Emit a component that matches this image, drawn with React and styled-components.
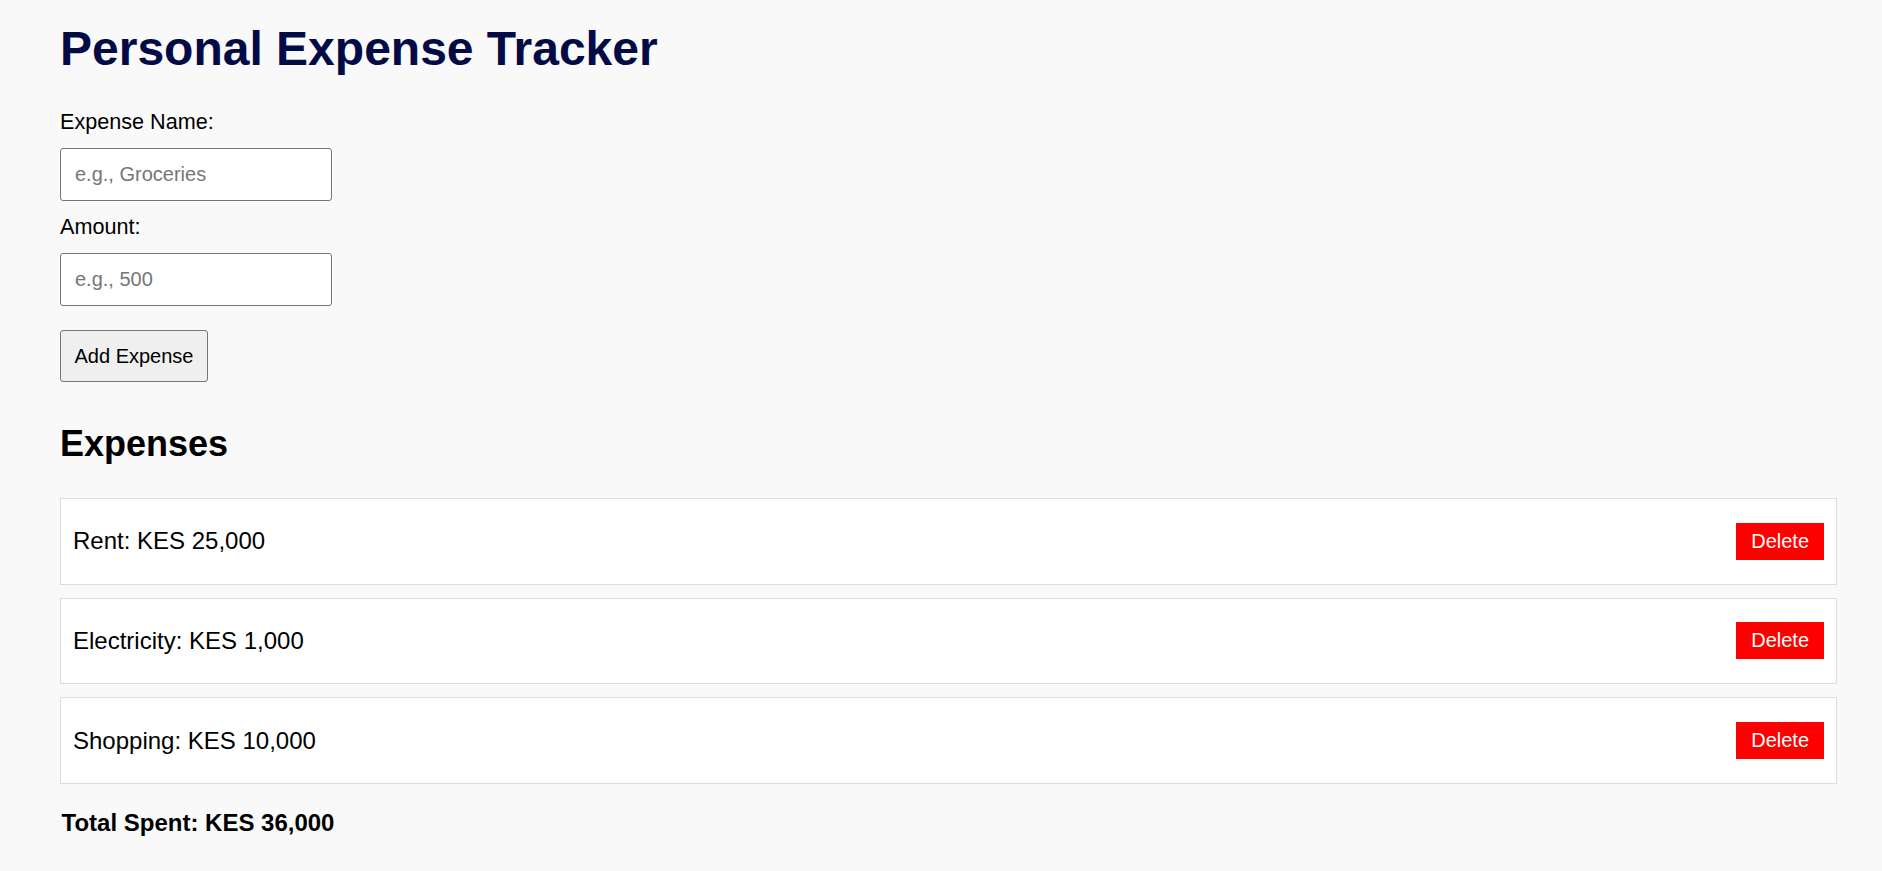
import { useState } from "react";
import styled, { createGlobalStyle } from "styled-components";

const GlobalStyle = createGlobalStyle`
    html, body {
        margin: 0;
        padding: 0;
        background-color: #f9f9f9;
        font-family: "Liberation Sans", Arial, sans-serif;
        color: #000;
    }
    * {
        box-sizing: border-box;
    }
`;

const Page = styled.main`
    padding: 21.6px 45px 40px 60px;
`;

const Title = styled.h1`
    margin: 0 0 34.6px;
    font-size: 48px;
    line-height: 54px;
    font-weight: bold;
    color: #020b45;
`;

const Form = styled.form`
    display: flex;
    flex-direction: column;
    align-items: flex-start;
`;

const Label = styled.label`
    display: block;
    font-size: 21.6px;
    line-height: 24px;
    margin-bottom: 14.3px;
`;

const Input = styled.input`
    width: 272px;
    height: 52.4px;
    padding: 0 14px;
    margin-bottom: ${(props) => props.$gap || "14px"};
    font-family: inherit;
    font-size: 20px;
    border: 1px solid #767676;
    border-radius: 3px;
    background: #fff;

    &::placeholder {
        color: #767676;
    }
`;

const AddButton = styled.button`
    height: 52px;
    width: 148px;
    padding: 0;
    font-family: inherit;
    font-size: 20px;
    color: #000;
    background-color: #efefef;
    border: 1px solid #767676;
    border-radius: 3px;
    cursor: pointer;
`;

const SubTitle = styled.h2`
    margin: 43px 0 35px;
    font-size: 36px;
    line-height: 38px;
    font-weight: bold;
`;

const List = styled.ul`
    list-style: none;
    margin: 0;
    padding: 0;
`;

const Row = styled.li`
    display: flex;
    align-items: center;
    justify-content: space-between;
    height: 86.4px;
    padding: 0 12px;
    margin-bottom: 13.2px;
    background-color: #fff;
    border: 1px solid #dcdcdc;
    font-size: 24px;

    &:last-child {
        margin-bottom: 0;
    }
`;

const DeleteButton = styled.button`
    height: 37px;
    padding: 0 15px;
    font-family: inherit;
    font-size: 20px;
    color: #fff;
    background-color: #ff0000;
    border: none;
    border-radius: 0;
    cursor: pointer;
`;

const Total = styled.p`
    margin: 26px 0 0 1.5px;
    font-size: 24px;
    line-height: 26px;
    font-weight: bold;
`;

const initialExpenses = [
    { id: 1, name: "Rent", amount: 25000 },
    { id: 2, name: "Electricity", amount: 1000 },
    { id: 3, name: "Shopping", amount: 10000 },
];

function App() {
    const [expenses, setExpenses] = useState(initialExpenses);
    const [name, setName] = useState("");
    const [amount, setAmount] = useState("");

    const handleAdd = (e) => {
        e.preventDefault();
        if (!name || !amount) return;
        setExpenses([...expenses, { id: Date.now(), name, amount: Number(amount) }]);
        setName("");
        setAmount("");
    };

    const total = expenses.reduce((sum, item) => sum + item.amount, 0);

    return (
        <Page>
            <GlobalStyle />
            <Title>Personal Expense Tracker</Title>
            <Form onSubmit={handleAdd}>
                <Label htmlFor="expense-name">Expense Name:</Label>
                <Input
                    id="expense-name"
                    placeholder="e.g., Groceries"
                    value={name}
                    onChange={(e) => setName(e.target.value)}
                />
                <Label htmlFor="expense-amount">Amount:</Label>
                <Input
                    id="expense-amount"
                    placeholder="e.g., 500"
                    $gap="24.6px"
                    value={amount}
                    onChange={(e) => setAmount(e.target.value)}
                />
                <AddButton type="submit">Add Expense</AddButton>
            </Form>
            <SubTitle>Expenses</SubTitle>
            <List>
                {expenses.map((item) => (
                    <Row key={item.id}>
                        <span>{item.name}: KES {item.amount.toLocaleString("en-US")}</span>
                        <DeleteButton onClick={() => setExpenses(expenses.filter((x) => x.id !== item.id))}>
                            Delete
                        </DeleteButton>
                    </Row>
                ))}
            </List>
            <Total>Total Spent: KES {total.toLocaleString("en-US")}</Total>
        </Page>
    );
}

export default App;
